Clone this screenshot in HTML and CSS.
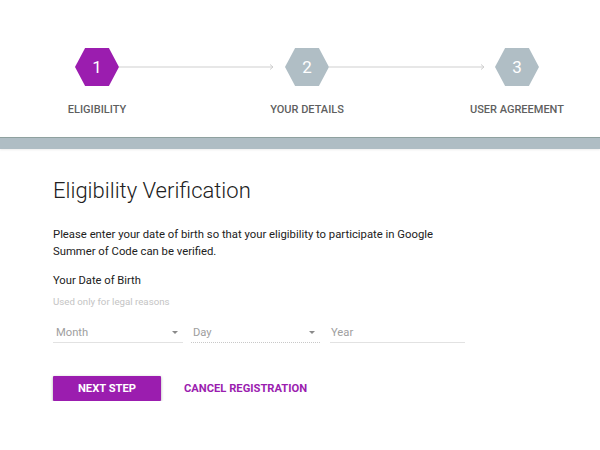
FILE: index.html
```html
<!DOCTYPE html>
<html>
<head>
<meta charset="utf-8">
<link rel="stylesheet" href="styles.css">
</head>
<body>
<header class="header">
  <div class="steps">
    <div class="hex hex-active">1</div>
    <div class="connector">
      <svg width="166" height="8" viewBox="0 0 166 8"><line x1="0" y1="4" x2="154" y2="4" stroke="#cfcfcf" stroke-width="1"/><polyline points="151,1.5 154,4 151,6.5" fill="none" stroke="#cfcfcf" stroke-width="1"/></svg>
    </div>
    <div class="hex">2</div>
    <div class="connector">
      <svg width="166" height="8" viewBox="0 0 166 8"><line x1="0" y1="4" x2="155" y2="4" stroke="#cfcfcf" stroke-width="1"/><polyline points="152,1.5 155,4 152,6.5" fill="none" stroke="#cfcfcf" stroke-width="1"/></svg>
    </div>
    <div class="hex">3</div>
  </div>
  <div class="labels">
    <div class="label">ELIGIBILITY</div>
    <div class="label">YOUR DETAILS</div>
    <div class="label">USER AGREEMENT</div>
  </div>
</header>
<div class="band"></div>
<main class="content">
  <h1 class="title">Eligibility Verification</h1>
  <p class="intro">Please enter your date of birth so that your eligibility to participate in Google Summer of Code can be verified.</p>
  <div class="dob-label">Your Date of Birth</div>
  <div class="hint">Used only for legal reasons</div>
  <div class="fields">
    <div class="field field-month"><span>Month</span><span class="caret"></span></div>
    <div class="field field-day"><span>Day</span><span class="caret"></span></div>
    <div class="field field-year"><span>Year</span></div>
  </div>
  <div class="actions">
    <button class="btn-primary">NEXT STEP</button>
    <button class="btn-link">CANCEL REGISTRATION</button>
  </div>
</main>
</body>
</html>
```
FILE: styles.css
```css
* { box-sizing: border-box; }
html, body { margin: 0; padding: 0; background: #fff; }
body { font-family: Roboto, "Noto Sans", sans-serif; color: #212121; }

.header { padding-top: 48px; height: 137px; background: #fff; }
.steps { display: flex; align-items: center; padding-left: 75px; }
.hex {
  width: 44px; height: 38px;
  background: #b0bec5; color: #fff;
  clip-path: polygon(23% 0, 77% 0, 100% 50%, 77% 100%, 23% 100%, 0 50%);
  display: flex; align-items: center; justify-content: center;
  font-size: 17px; font-weight: 400;
}
.hex-active { background: #9b1daf; }
.connector { width: 166px; height: 8px; display: flex; }
.connector svg { display: block; }

.labels { display: grid; grid-template-columns: 150px 150px 150px; column-gap: 60px; padding-left: 22px; margin-top: 17px; }
.label { text-align: center; font-size: 11px; line-height: 14px; font-weight: 500; color: #5f5f5f; }

.band { height: 12px; background: #afbdc4; border-top: 1px solid #8fa19f; box-shadow: 0 1px 2px rgba(0,0,0,0.08); }

.content { padding: 28px 0 0 53px; }
.title { margin: 0; font-size: 22px; line-height: 28px; font-weight: 300; color: #212121; }
.intro { margin: 21px 0 0; width: 400px; font-size: 11.3px; line-height: 17px; color: #212121; }
.dob-label { margin-top: 12px; font-size: 11.2px; line-height: 17px; color: #212121; }
.hint { margin-top: 6px; font-size: 9.7px; line-height: 14px; color: #c4c4c4; }

.fields { display: flex; margin-top: 15px; }
.field {
  display: flex; align-items: center; justify-content: space-between;
  padding: 0 5px 1px 3px; height: 19px;
  font-size: 11.2px; line-height: 17px; color: #9e9e9e;
  border-bottom: 1px solid #e2e2e2;
}
.field-month { width: 130px; }
.field-day { width: 129px; margin-left: 8px; border-bottom: 1px dotted #c8c8c8; padding-left: 2px; }
.field-year { width: 135px; margin-left: 10px; padding-left: 1px; }
.caret { width: 0; height: 0; border-left: 3px solid transparent; border-right: 3px solid transparent; border-top: 3px solid #8a8a8a; }

.actions { display: flex; align-items: center; margin-top: 33px; }
.btn-primary {
  width: 108px; height: 25px; border: 0; border-radius: 1px;
  background: #9b1daf; color: #fff;
  font-family: Roboto, sans-serif; font-size: 11.2px; font-weight: 700;
  box-shadow: 0 1px 3px rgba(0,0,0,0.35);
  padding: 0;
}
.btn-link {
  margin-left: 23px; border: 0; background: transparent; padding: 0;
  color: #9b1daf; font-family: Roboto, sans-serif; font-size: 11.2px; font-weight: 700;
}
```
